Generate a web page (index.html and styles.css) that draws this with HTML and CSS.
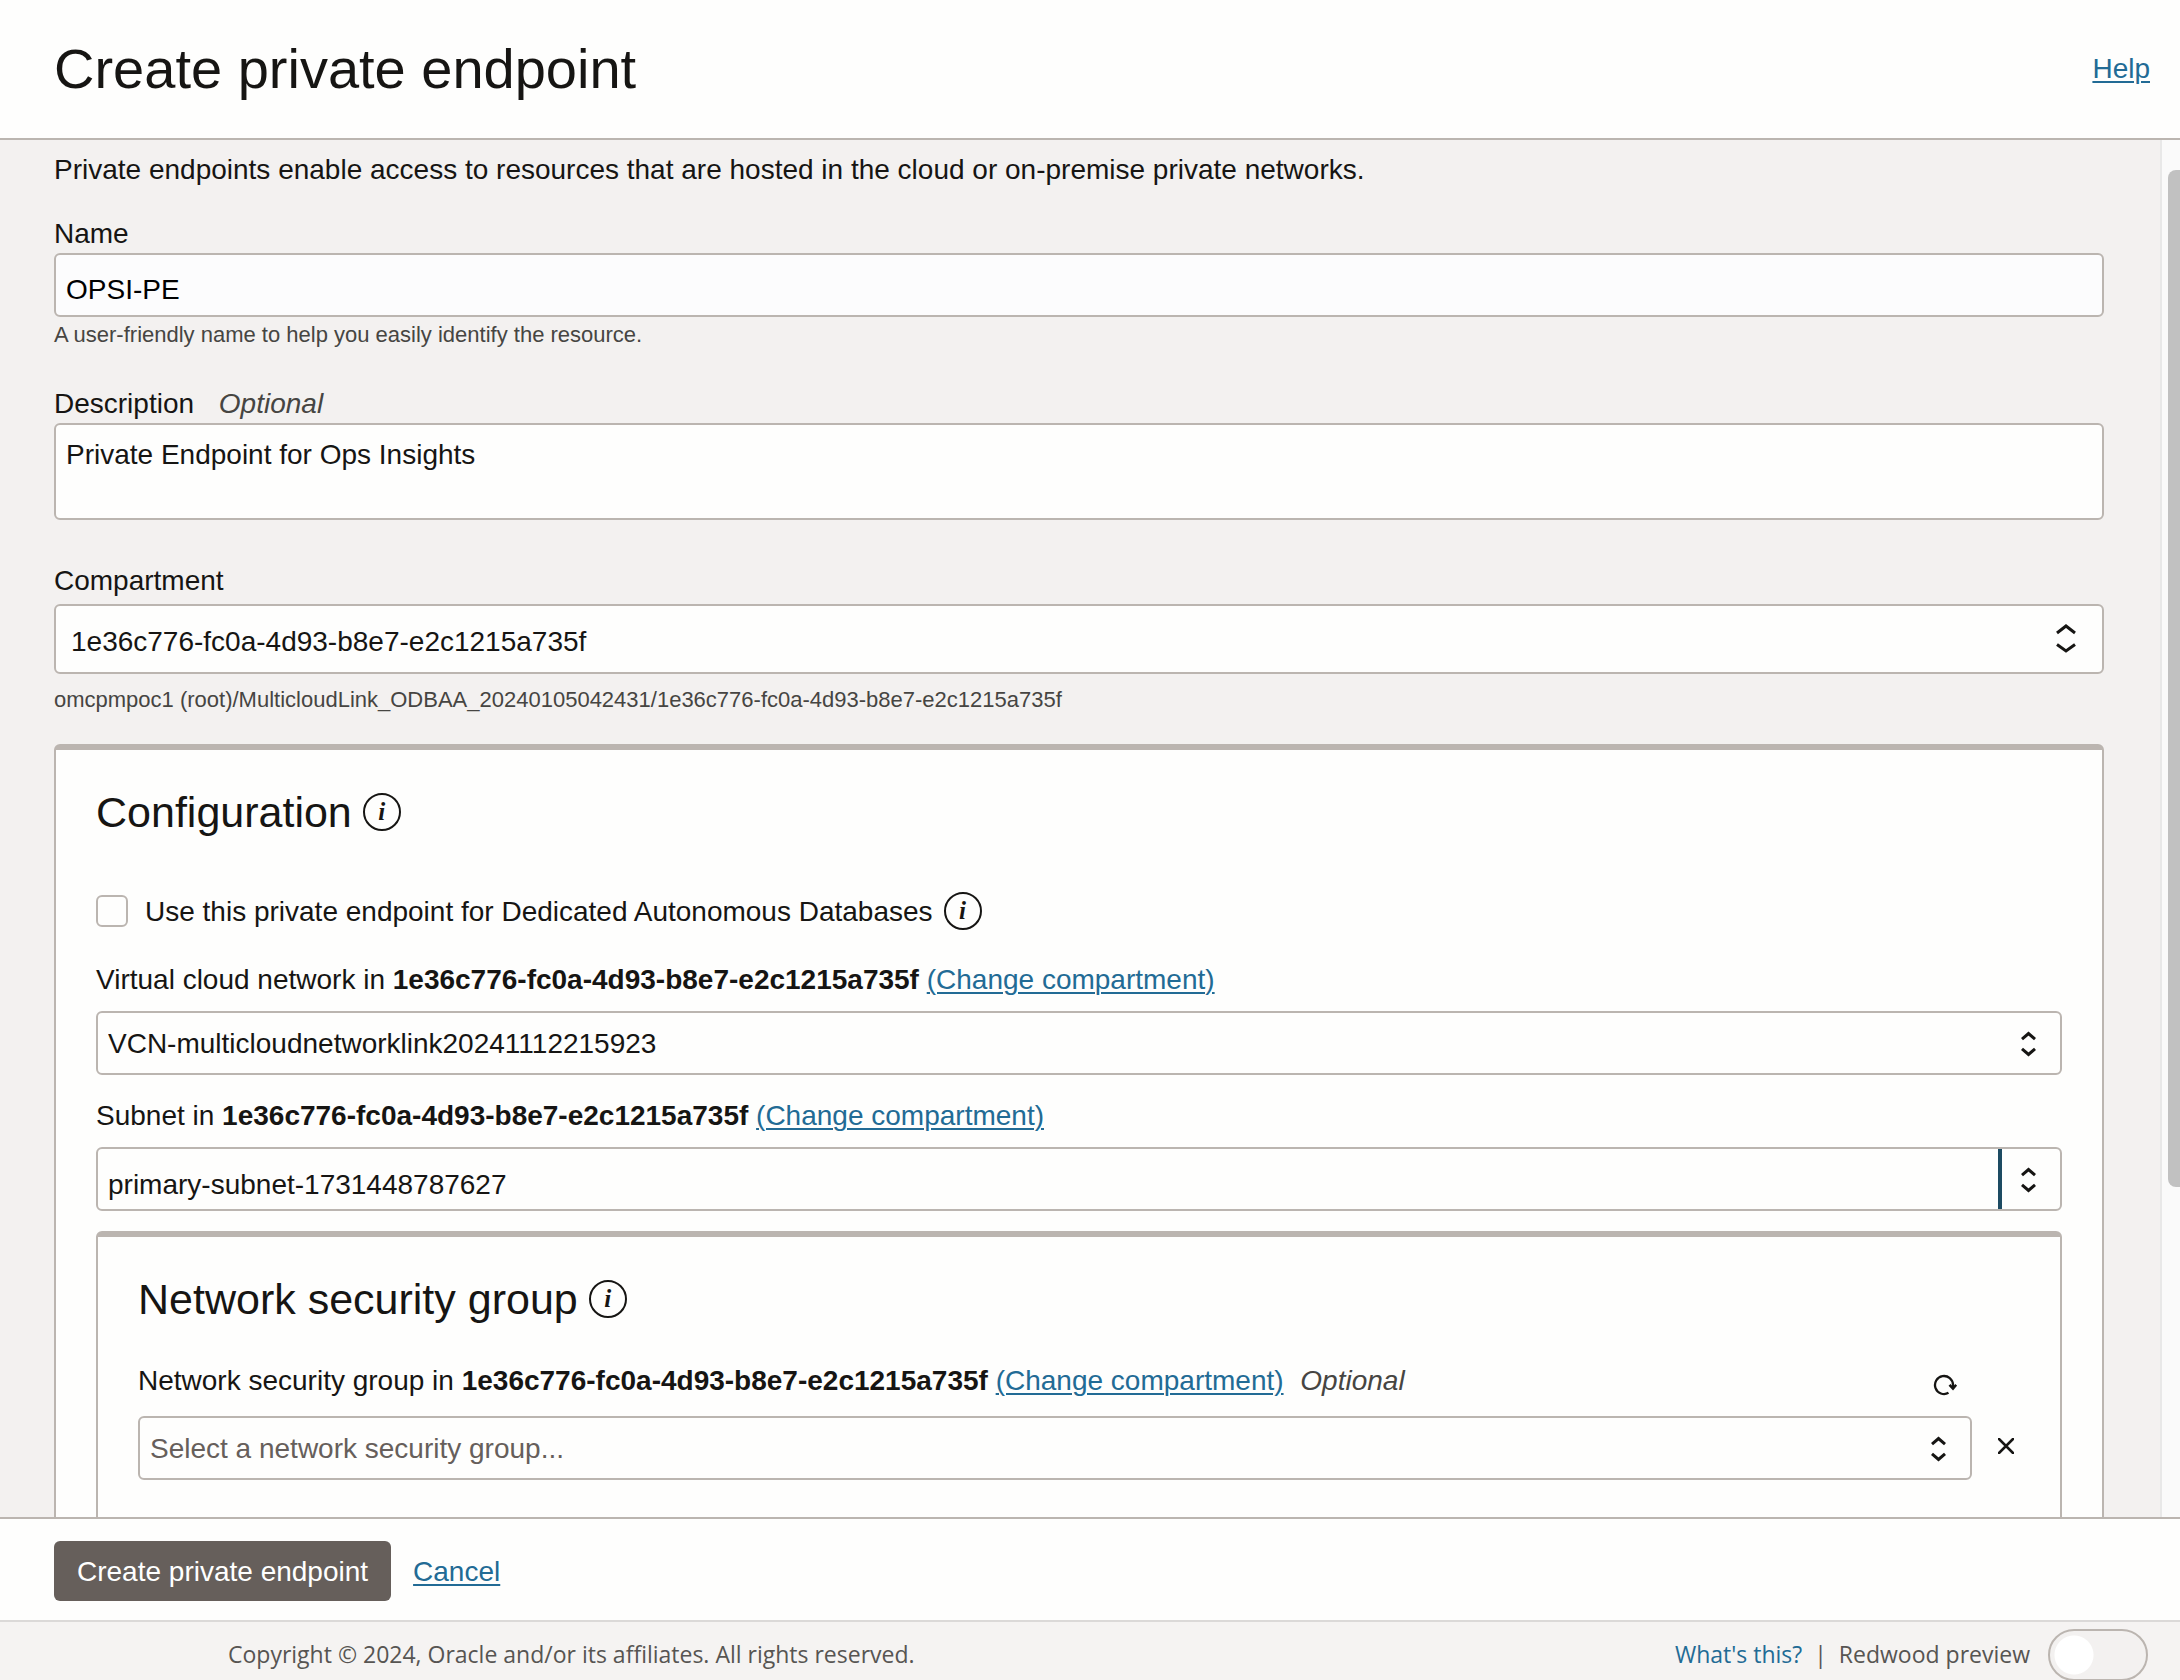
FILE: index.html
```html
<!DOCTYPE html>
<html lang="en">
<head>
<meta charset="utf-8">
<meta name="viewport" content="width=device-width, initial-scale=1">
<title>Create private endpoint</title>
<link rel="stylesheet" href="styles.css">
</head>
<body>
<svg class="sprite" aria-hidden="true">
  <symbol id="updown" viewBox="0 0 15 26">
    <path d="M1 8.200 7.500 2.500l6.500 5.700M1 17.800l6.500 5.700 6.500-5.700" fill="none" stroke="currentColor" stroke-width="3"/>
  </symbol>
  <symbol id="updown-wide" viewBox="0 0 20 29">
    <path d="M1 9 10 2l9 7M1 20.500 10 27l9-6.500" fill="none" stroke="currentColor" stroke-width="3"/>
  </symbol>
</svg>
<div class="dialog">
  <header class="header">
    <h1 class="title">Create private endpoint</h1>
    <a class="link" href="#help">Help</a>
  </header>

  <div class="body">
    <main class="content">
      <p class="intro">Private endpoints enable access to resources that are hosted in the cloud or on-premise private networks.</p>

      <div class="field">
        <label class="label" for="name">Name</label>
        <input class="control control-name" id="name" type="text" value="OPSI-PE">
        <p class="hint">A user-friendly name to help you easily identify the resource.</p>
      </div>

      <div class="field">
        <label class="label" for="description">Description <i class="optional">Optional</i></label>
        <textarea class="control control-area" id="description">Private Endpoint for Ops Insights</textarea>
      </div>

      <div class="field field-compartment">
        <label class="label" for="compartment">Compartment</label>
        <div class="picker picker-large">
          <select class="control" id="compartment"><option>1e36c776-fc0a-4d93-b8e7-e2c1215a735f</option></select>
          <svg class="arrows" aria-hidden="true"><use href="#updown-wide"/></svg>
        </div>
        <p class="hint">omcpmpoc1 (root)/MulticloudLink_ODBAA_20240105042431/1e36c776-fc0a-4d93-b8e7-e2c1215a735f</p>
      </div>

      <section class="card">
        <div class="card-head">
          <h2 class="card-title">Configuration</h2>
          <button class="info" type="button" aria-label="About configuration">i</button>
        </div>

        <div class="check-row">
          <input class="check" id="dedicated" type="checkbox">
          <label for="dedicated">Use this private endpoint for Dedicated Autonomous Databases</label>
          <button class="info" type="button" aria-label="About dedicated databases">i</button>
        </div>

        <div class="field field-network">
          <div class="label"><label for="vcn">Virtual cloud network in <b>1e36c776-fc0a-4d93-b8e7-e2c1215a735f</b></label> <a class="link" href="#vcn-compartment">(Change compartment)</a></div>
          <div class="picker">
            <select class="control" id="vcn"><option>VCN-multicloudnetworklink20241112215923</option></select>
            <svg class="arrows" aria-hidden="true"><use href="#updown"/></svg>
          </div>
        </div>

        <div class="field field-network">
          <div class="label"><label for="subnet">Subnet in <b>1e36c776-fc0a-4d93-b8e7-e2c1215a735f</b></label> <a class="link" href="#subnet-compartment">(Change compartment)</a></div>
          <div class="picker picker-split">
            <select class="control" id="subnet"><option>primary-subnet-1731448787627</option></select>
            <svg class="arrows" aria-hidden="true"><use href="#updown"/></svg>
          </div>
        </div>

        <section class="card card-nested">
          <div class="card-head">
            <h2 class="card-title">Network security group</h2>
            <button class="info" type="button" aria-label="About network security groups">i</button>
          </div>
          <div class="group-row">
            <div class="field">
              <div class="group-label">
                <div class="label"><label for="nsg">Network security group in <b>1e36c776-fc0a-4d93-b8e7-e2c1215a735f</b></label> <a class="link" href="#nsg-compartment">(Change compartment)</a> <i class="optional optional-near">Optional</i></div>
                <button class="icon-button" type="button" aria-label="Refresh">
                  <svg width="24" height="22" viewBox="0 0 24 22" aria-hidden="true"><path d="M15.500 18.800A9 9 0 1 1 20 11v3" fill="none" stroke="currentColor" stroke-width="2.300"/><path d="M16.500 10.800l3.500 3.700 3.200-3.700" fill="none" stroke="currentColor" stroke-width="2.600"/></svg>
                </button>
              </div>
              <div class="picker">
                <select class="control control-empty" id="nsg"><option>Select a network security group...</option></select>
                <svg class="arrows" aria-hidden="true"><use href="#updown"/></svg>
              </div>
            </div>
            <button class="icon-button remove" type="button" aria-label="Remove">
              <svg width="16" height="16" viewBox="0 0 16 16" aria-hidden="true"><path d="M1 1l14 14M15 1L1 15" fill="none" stroke="currentColor" stroke-width="2.500" stroke-linecap="round"/></svg>
            </button>
          </div>
        </section>
      </section>
    </main>
    <div class="scrollbar"><div class="thumb"></div></div>
  </div>

  <div class="actions">
    <button class="primary" type="submit">Create private endpoint</button>
    <a class="link" href="#cancel">Cancel</a>
  </div>

  <footer class="footer">
    <p class="copyright">Copyright © 2024, Oracle and/or its affiliates. All rights reserved.</p>
    <div class="preview">
      <a class="whats" href="#preview">What's this?</a>
      <span>|</span>
      <label for="redwood">Redwood preview</label>
      <input class="toggle" id="redwood" type="checkbox" role="switch">
    </div>
  </footer>
</div>
</body>
</html>
```
FILE: styles.css
```css
:root {
  --ink: #161513;
  --muted: #464542;
  --line: #bbb5b0;
  --paper: #fefefd;
  --link: #226b95;
}

* { box-sizing: border-box; }

body, h1, h2, p { margin: 0; font-weight: 400; }

body {
  color: var(--ink);
  background: var(--paper);
  font: 28px/38px "Liberation Sans", Arial, sans-serif;
}

button, input, select, textarea { font: inherit; color: inherit; }

.sprite { display: none; }

.dialog { display: flex; flex-direction: column; height: 100vh; overflow: hidden; }

.link { color: var(--link); text-decoration: underline; text-decoration-thickness: 2px; text-underline-offset: 3px; }

.header {
  display: flex;
  align-items: center;
  justify-content: space-between;
  padding: 35px 30px 35px 54px;
  border-bottom: 2px solid var(--line);
}

.title { font-size: 56px; line-height: 68px; }

.body { display: flex; flex: 1; min-height: 0; background: #f3f1f0; }

.content {
  flex: 1;
  min-width: 0;
  padding: 11px 56px 0 54px;
  overflow-y: auto;
  scrollbar-width: none;
}

.scrollbar { width: 20px; padding: 30px 0 0 6px; border-left: 2px solid #e8e8e8; background: #fafafa; }
.thumb { height: 1017px; max-height: 76%; border-radius: 8px 0 0 8px; background: #c1c1c1; }

.intro { margin-bottom: 26px; }

.field { display: flex; flex-direction: column; }
.optional { margin-left: 17px; color: var(--muted); }
.optional-near { margin-left: 9px; }
.hint { margin: 3px 0 35px; color: var(--muted); font-size: 22px; line-height: 30px; }

.control {
  width: 100%;
  height: 64px;
  padding: 2px 10px 0;
  border: 2px solid var(--line);
  border-radius: 6px;
  outline: 0;
  background: var(--paper);
  appearance: none;
}

.control-name { padding-top: 10px; color: #000; background: #fcfcfd; }
.control-area { display: block; height: 97px; padding-top: 11px; resize: none; }
.control-empty { color: #665f5b; }

.field-compartment { margin-top: 42px; }
.field-compartment .label { margin-bottom: 4px; }
.field-compartment .hint { margin: 11px 0 29px; }

.picker { position: relative; }
.arrows { position: absolute; right: 26px; top: 20px; width: 15px; height: 26px; pointer-events: none; }
.picker-large .control { height: 70px; padding: 5px 15px 0; }
.picker-large .arrows { right: 28px; width: 20px; height: 29px; }
.picker-split .control { padding-top: 12px; }
.picker-split::after { content: ""; position: absolute; top: 2px; bottom: 2px; right: 60px; width: 4px; background: #1d4b62; }

.card { padding: 37px 40px 80px; border: 2px solid var(--line); border-top-width: 6px; border-radius: 6px; background: var(--paper); }
.card-nested { margin-top: 20px; }

.card-head { display: flex; align-items: center; gap: 11px; }
.card-title { font-size: 43px; line-height: 50px; }

.info {
  width: 38px;
  height: 38px;
  padding: 0;
  border: 2px solid var(--ink);
  border-radius: 50%;
  background: none;
  font: italic 700 25px/30px "Liberation Serif", serif;
}

.check-row { display: flex; align-items: center; height: 38px; margin: 55px 0 31px; }
.check-row label { padding-top: 2px; }
.check { width: 32px; height: 32px; margin: 0 17px 0 0; border: 2px solid var(--line); border-radius: 6px; background: var(--paper); appearance: none; }
.check-row .info { margin-left: 11px; }

.field-network .label { margin-bottom: 12px; }
.field-network + .field-network { margin-top: 22px; }

.group-row { display: flex; align-items: flex-end; margin-top: 38px; }
.group-row .field { flex: 1; }
.group-label { display: flex; justify-content: space-between; margin-bottom: 16px; }

.icon-button { display: flex; padding: 12px 15px 0 0; border: 0; background: none; }
.remove { padding: 0 6px 26px 26px; }

.actions { display: flex; align-items: center; gap: 22px; padding: 22px 54px 19px; border-top: 2px solid var(--line); }
.primary { height: 60px; padding: 2px 23px 0; border: 0; border-radius: 6px; color: #fff; background: #665f5b; }
.actions .link { padding-top: 2px; }

.footer {
  display: flex;
  justify-content: space-between;
  height: 60px;
  padding: 7px 32px 0 228px;
  border-top: 2px solid #dbd9d8;
  color: #575552;
  background: #f5f3f2;
  font: 23px/50px "Open Sans", "Noto Sans", sans-serif;
}

.preview { display: flex; gap: 12px; }
.whats { color: var(--link); text-decoration: none; }

.toggle {
  width: 100px;
  height: 52px;
  margin: 0 0 0 6px;
  border: 2px solid var(--line);
  border-radius: 26px;
  background: radial-gradient(circle at 24px 24px, #fff 19px, #f3f1f0 20px);
  appearance: none;
}
```
